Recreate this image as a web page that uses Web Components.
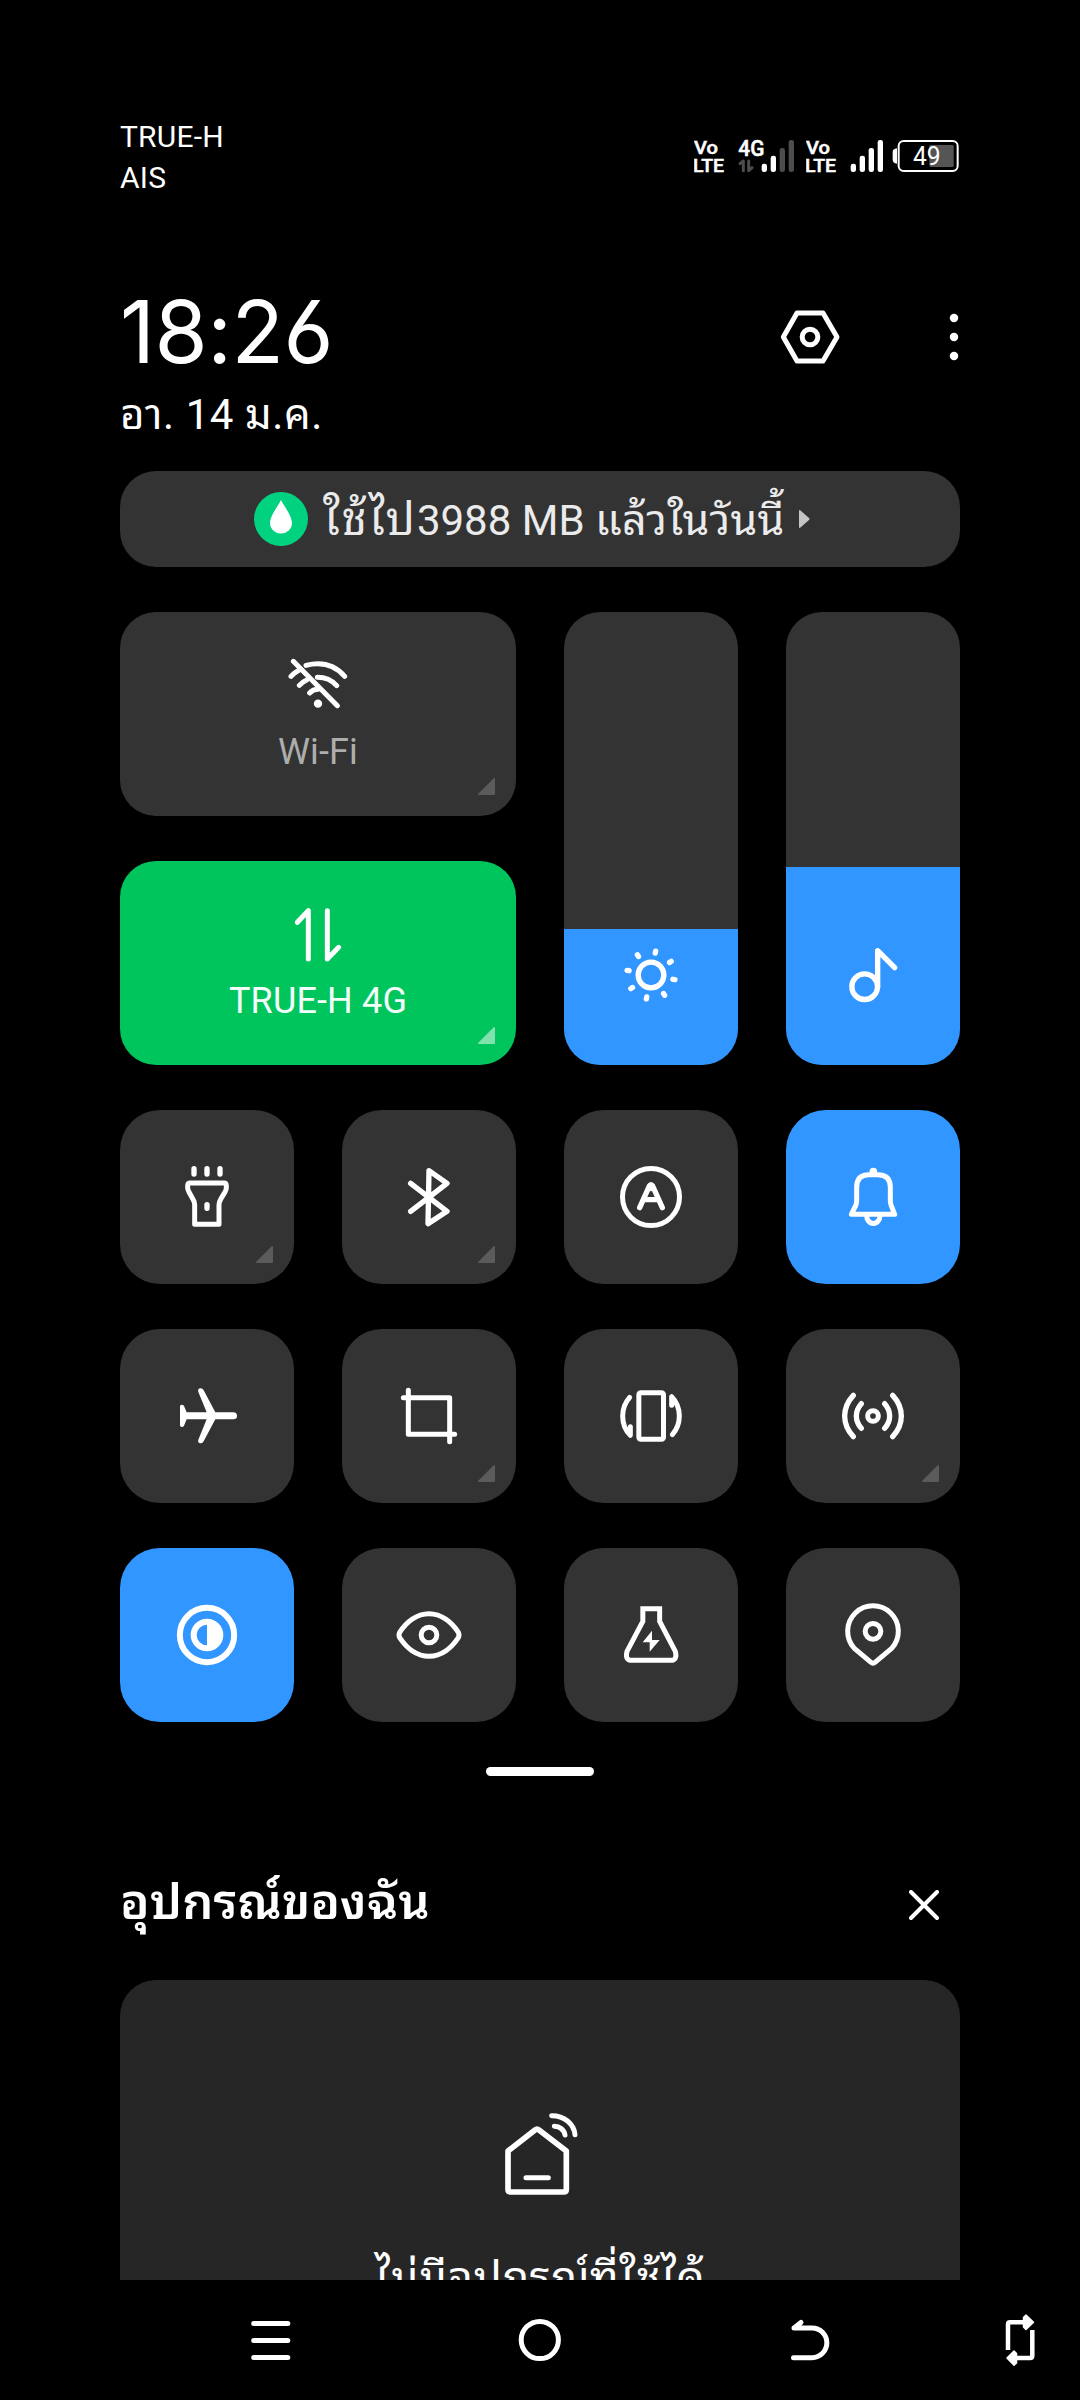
<!DOCTYPE html>
<html lang="th">
<head>
<meta charset="utf-8">
<title>Control center</title>
<style>
html,body{margin:0;background:#000}
body{width:1080px;height:2400px;overflow:hidden;font-family:Roboto,"Noto Sans Thai Looped","Noto Sans Thai","Noto Sans",sans-serif;color:#fff}
</style>
</head>
<body>
<control-center></control-center>
<script>
const define = (name, html) => {
  const t = document.createElement('template');
  t.innerHTML = html;
  customElements.define(name, class extends HTMLElement {
    constructor() {
      super();
      this.attachShadow({mode: 'open'}).appendChild(t.content.cloneNode(true));
    }
  });
};

/* Icons: [viewBox, width, height, markup]; drawn on a 3x grid */
const mirror = 'transform="translate(1938 0) scale(-1 1)"';
const ICONS = {
  settings: ['114 76 192 192', 64, 64, '<path d="M171 100H249L291 172L249 244H171L130 172Z"/><circle cx="210" cy="172" r="23.5"/>'],
  more: ['624 76 36 192', 12, 64, '<g fill="#fff" stroke="none"><circle cx="642" cy="115" r="12.7"/><circle cx="642" cy="172" r="12.7"/><circle cx="642" cy="229" r="12.7"/></g>'],
  drop: ['0 0 54 54', 54, 54, '<g stroke="none"><circle cx="27" cy="27" r="27" fill="#00d27f"/><path fill="#fff" d="M27 8C30 14 38 24 38 31A11 10.5 0 0 1 16 31C16 24 24 14 27 8Z"/></g>'],
  arrow: ['0 0 11 18', 11, 18, '<path fill="#c4c4c4" stroke="none" d="M0 1Q0 -1 2 1L10 8Q11 9 10 10L2 17Q0 19 0 17Z"/>'],
  wifi: ['534 166 180 160', 60, 53.33, '<path d="M588 194Q660 176 704 227M622 230Q658 230 680 255M543 227Q550 219 560 213L571 206M568 254Q578 243 590 238M599 277Q609 266 624 266"/><path d="M550 182L682 315" stroke-width="15"/><circle cx="624" cy="309" r="12.5" fill="#fff" stroke="none"/>'],
  data: ['534 910 180 180', 60, 60, '<path d="M562 962L595 927V1072M652 927V1072L686 1037"/>'],
  sun: ['42 123 522 522', 174, 174, '<g stroke-width="16"><circle cx="303" cy="375" r="38.5"/>' + [0,1,2,3,4,5,6,7].map(i => `<path d="M303 308V302" transform="rotate(${11 + 45 * i} 303 375)"/>`).join('') + '</g>'],
  note: ['708 123 522 522', 174, 174, '<g stroke-width="16"><circle cx="944" cy="410" r="38.5"/><path d="M983 410V302L1034 353"/></g>'],
  torch: ['30 30 522 522', 174, 174, '<path d="M252 206V222M291 206V222M330 206V222M291 314V325" stroke-width="16"/><path d="M241 249H342Q349 249 349 257V263Q349 269 345 276L332 298Q327 306 327 314V373H254V314Q254 306 249 298L237 276Q233 269 233 263V257Q233 249 241 249Z"/>'],
  bluetooth: ['696 30 522 522', 174, 174, '<path stroke-width="16" d="M902 250L1011 334L954 371L957 212L1011 250L902 334"/>'],
  auto: ['42 30 522 522', 174, 174, '<circle cx="303" cy="291" r="85.5"/><path stroke-width="16" d="M269 323L298 258Q303 250 308 258L337 323M284 299H322"/><path d="M303 258V266"/>'],
  bell: ['708 30 522 522', 174, 174, '<circle cx="970" cy="215" r="11.5" fill="#fff" stroke="none"/><path d="M904 343L917 317Q920 310 920 302V262Q920 224 956 224H984Q1021 224 1021 262V302Q1021 310 1024 317L1034 343ZM950 347A20 23.5 0 0 0 990 347"/>'],
  plane: ['30 687 522 522', 174, 174, '<path fill="#fff" stroke="none" d="M230 937H290L265 876Q262 865 272 865Q278 865 281 871L316 937H370Q381 937 381 948Q381 958 370 958H316L281 1024Q278 1030 272 1030Q262 1029 265 1019L290 958H230L222 977Q220 981 215 981Q210 981 210 976V919Q210 914 215 914Q220 914 222 918Z"/>'],
  crop: ['696 687 522 522', 174, 174, '<path d="M880 893H1019V1025M895 871V1003H1034"/>'],
  rotate: ['42 687 522 522', 174, 174, '<rect x="266.500" y="878" width="74" height="140" rx="6"/>' + [0, 180].map(a => `<g transform="rotate(${a} 303 948)"><path d="M239 892Q218 916 218 948Q218 983 241 1006V980"/><path fill="#fff" stroke-width="4" d="M241 1006V980L228 988Z"/></g>`).join('')],
  hotspot: ['708 687 522 522', 174, 174, '<circle cx="969" cy="948" r="16"/>' + ['', mirror].map(m => `<path stroke-width="16" ${m} d="M934 911Q919 928 919 948Q919 968 934 985M910 886Q884 914 884 948Q884 982 910 1010"/>`).join('')],
  contrast: ['0 0 522 522', 174, 174, '<g stroke-width="18"><circle cx="261" cy="261" r="81.500"/><circle cx="261" cy="261" r="40"/></g><path fill="#fff" stroke="none" d="M261 221A40 40 0 0 1 261 301Z"/>'],
  eye: ['0 0 522 522', 174, 174, '<path d="M173 253C192 224 223 197 261 197S330 224 349 253Q353 261 349 269C330 298 299 325 261 325S192 298 173 269Q169 261 173 253Z"/><circle cx="261" cy="261" r="23.500"/>'],
  flask: ['0 0 522 522', 174, 174, '<path stroke-linejoin="miter" d="M236.500 182H287V220L334 310Q341 337 320 337H203Q182 337 189 310L236.500 220Z"/><path fill="#fff" stroke="none" d="M264 248L236 283H257V311L287 276H264Z"/>'],
  pin: ['0 0 522 522', 174, 174, '<path d="M255 343L205 301A76 76 0 1 1 317 301L267 343Q261 349 255 343Z"/><circle cx="261" cy="250" r="23.500"/>'],
  close: ['0 0 30 30', 30, 30, '<path stroke-width="4" d="M2 2L28 28M28 2L2 28"/>'],
  home: ['480 90 240 265', 80, 88.33, '<path stroke-width="17" d="M504 213L585 150Q591 145 597 150L679 213V328Q679 336 671 336H512Q504 336 504 328Z"/><path d="M558 293H625M635 107A69 62 0 0 1 705 164M643 139A32 30 0 0 1 675 165"/>'],
  recents: ['240 0 60 120', 60, 120, '<path stroke-width="5" d="M253.700 43.500H287.800M253.700 60.500H287.800M253.700 77.500H287.800"/>'],
  circle: ['510 0 60 120', 60, 120, '<circle stroke-width="5" cx="539.800" cy="60" r="18.600"/>'],
  back: ['780 0 60 120', 60, 120, '<path stroke-width="5" d="M793.500 77.700H812A14.600 14.600 0 0 0 812 48H794L801 42.500"/><path fill="#fff" stroke="none" d="M792 47L801 41V50H793Z"/>'],
  flip: ['990 0 60 120', 60, 120, '<g stroke-linecap="butt" stroke-width="4.500"><path d="M1008 70V44.500Q1008 42.300 1010 42.300H1027M1032.300 50V76Q1032.300 78 1030 78H1014"/></g><path fill="#fff" stroke="#fff" stroke-width="1.500" d="M1026 35L1033.500 42.300L1026 49.500L1023.500 47V37.500ZM1014 71L1007 78L1014 85.300L1016.500 83V73.500Z"/>'],
};

customElements.define('cc-icon', class extends HTMLElement {
  constructor() { super(); this.attachShadow({mode: 'open'}); }
  connectedCallback() {
    const [box, w, h, body] = ICONS[this.getAttribute('name')];
    this.shadowRoot.innerHTML = `<style>:host{display:block;flex:none}svg{display:block}</style>
<svg viewBox="${box}" width="${w}" height="${h}" fill="none" stroke="#fff" stroke-width="15" stroke-linecap="round" stroke-linejoin="round">${body}</svg>`;
  }
});

define('volte-badge', `<style>:host{display:block}svg{display:block;fill:#fff;font-weight:500;stroke:#fff;stroke-width:1.5}</style>
<svg viewBox="102 78 96 120" width="32" height="40"><text x="102" y="131" font-size="56" textLength="72" lengthAdjust="spacingAndGlyphs">Vo</text><text x="99" y="185" font-size="57" textLength="93" lengthAdjust="spacingAndGlyphs">LTE</text></svg>`);

define('signal-4g', `<style>:host{display:block}svg{display:block;fill:#fff}</style>
<svg viewBox="234 78 174 120" width="58" height="40"><text x="235" y="137" font-size="64" font-weight="500" textLength="78" lengthAdjust="spacingAndGlyphs" stroke="#fff" stroke-width="1.500">4G</text>
<path d="M240 161L250 153V182M266 153V182L276 173" fill="none" stroke="#4d4d4d" stroke-width="9" stroke-linecap="round" stroke-linejoin="round"/>
<rect x="305" y="161" width="16" height="25" rx="7"/><rect x="332" y="137" width="16" height="49" rx="7"/><g fill="#4d4d4d"><rect x="359" y="114" width="16" height="72" rx="7"/><rect x="386" y="90" width="16" height="96" rx="7"/></g></svg>`);

define('signal-full', `<style>:host{display:block}svg{display:block;fill:#fff}</style>
<svg viewBox="570 78 102 120" width="34" height="40"><rect x="572" y="161" width="16" height="25" rx="7"/><rect x="599" y="137" width="16" height="49" rx="7"/><rect x="626" y="114" width="16" height="72" rx="7"/><rect x="653" y="90" width="16" height="96" rx="7"/></svg>`);

define('battery-level', `<style>:host{display:block}svg{display:block}</style>
<svg viewBox="696 78 204 120" width="68" height="40"><path d="M711 115Q698 117 698 126V150Q698 159 711 161Z" fill="#fff"/><rect x="716" y="93" width="177" height="90" rx="15" fill="none" stroke="#fff" stroke-width="6"/><rect x="808" y="105" width="73" height="66" rx="4" fill="#555"/><text x="759" y="165" font-size="76" fill="#fff" textLength="83" lengthAdjust="spacingAndGlyphs">49</text></svg>`);

define('status-bar', `<style>:host{display:flex;justify-content:space-between;height:82px;padding:116px 120px 0}
.ops{font-size:30px;line-height:41px;letter-spacing:.2px}
.icons{display:flex;margin:20px 0 0 0;height:40px}
signal-4g{margin-left:12px}signal-4g+volte-badge{margin-left:10px}signal-full{margin-left:12px}battery-level{margin-left:8px}</style>
<div class="ops"><div>TRUE-H</div><div>AIS</div></div>
<div class="icons"><volte-badge></volte-badge><signal-4g></signal-4g><volte-badge></volte-badge><signal-full></signal-full><battery-level></battery-level></div>`);

define('clock-header', `<style>:host{display:flex;justify-content:space-between;height:163px;padding:84px 120px 0}
.time{font:400 86px/100px Inter,Roboto,sans-serif;font-feature-settings:"cv03";height:103px;letter-spacing:-.5px}
.date{font-size:42px;line-height:60px;white-space:nowrap;letter-spacing:.6px}
.tools{display:flex;gap:106px;padding-top:23px}</style>
<div><div class="time">18:26</div><div class="date">อา. 14 ม.ค.</div></div>
<div class="tools"><cc-icon name="settings"></cc-icon><cc-icon name="more"></cc-icon></div>`);

define('data-usage', `<style>:host{display:flex;align-items:center;box-sizing:border-box;height:96px;margin:26px 120px 0;padding-left:134px;border-radius:36px;background:#333}
.text{margin:3px 16px 0 15px;width:460px;font-size:42px;line-height:60px;color:#ebebeb;white-space:nowrap}cc-icon:first-child{margin-top:-2px}</style>
<cc-icon name="drop"></cc-icon><span class="text"><slot></slot></span><cc-icon name="arrow"></cc-icon>`);

define('corner-mark', `<style>:host{display:block}svg{display:block}</style>
<svg width="17" height="17" viewBox="0 0 17 17"><path d="M15.500 .5Q17 -.5 17 1V16Q17 17 16 17H1Q-.5 17 .5 15.500Z" fill="#fff" style="fill-opacity:var(--mark,.2)"/></svg>`);

define('toggle-tile', `<style>:host{display:grid;border-radius:40px;background:#333;overflow:hidden}
:host([on]){background:#3196ff}
::slotted(*){grid-area:1/1}
.mark{grid-area:1/1;place-self:end;margin:21px}</style><slot></slot><div class="mark"><slot name="mark"></slot></div>`);

define('wide-tile', `<style>:host{display:grid;grid-column:span 2;border-radius:36px;background:#333;--label:#adadad}
:host([on]){background:#00c45c;--label:#f2fffa;--mark:.5}
.body{grid-area:1/1;display:flex;flex-direction:column;align-items:center;padding-top:44px}
.icon{height:71px}.label{font-size:36px;line-height:50px;color:var(--label);letter-spacing:.15px}
corner-mark{grid-area:1/1;place-self:end;margin:21px}</style>
<div class="body"><div class="icon"><slot name="icon"></slot></div><div class="label"><slot></slot></div></div><corner-mark></corner-mark>`);

define('level-slider', `<style>:host{display:flex;flex-direction:column;justify-content:flex-end;grid-row:span 2;border-radius:36px;background:#333;overflow:hidden}
.fill{display:flex;align-items:flex-end;background:#3196ff;height:var(--level)}::slotted(*){display:block}</style><div class="fill"><slot></slot></div>`);

define('quick-grid', `<style>:host{display:grid;grid-template-columns:repeat(4,174px);grid-template-rows:204px 204px 174px 174px 174px;gap:45px 48px;margin:45px 120px 0}
level-slider.b{--level:136px;grid-column:3;grid-row:1/3}level-slider.v{--level:198px;grid-column:4;grid-row:1/3}</style>
<wide-tile><cc-icon slot="icon" name="wifi"></cc-icon>Wi-Fi</wide-tile>
<level-slider class="b"><cc-icon name="sun"></cc-icon></level-slider><level-slider class="v"><cc-icon name="note"></cc-icon></level-slider>
<wide-tile on><cc-icon slot="icon" name="data"></cc-icon>TRUE-H 4G</wide-tile>
<toggle-tile><cc-icon name="torch"></cc-icon><corner-mark slot="mark"></corner-mark></toggle-tile>
<toggle-tile><cc-icon name="bluetooth"></cc-icon><corner-mark slot="mark"></corner-mark></toggle-tile>
<toggle-tile><cc-icon name="auto"></cc-icon></toggle-tile>
<toggle-tile on><cc-icon name="bell"></cc-icon></toggle-tile>
<toggle-tile><cc-icon name="plane"></cc-icon></toggle-tile>
<toggle-tile><cc-icon name="crop"></cc-icon><corner-mark slot="mark"></corner-mark></toggle-tile>
<toggle-tile><cc-icon name="rotate"></cc-icon></toggle-tile>
<toggle-tile><cc-icon name="hotspot"></cc-icon><corner-mark slot="mark"></corner-mark></toggle-tile>
<toggle-tile on><cc-icon name="contrast"></cc-icon></toggle-tile>
<toggle-tile><cc-icon name="eye"></cc-icon></toggle-tile>
<toggle-tile><cc-icon name="flask"></cc-icon></toggle-tile>
<toggle-tile><cc-icon name="pin"></cc-icon></toggle-tile>`);

define('drag-handle', `<style>:host{display:block;width:108px;height:9px;border-radius:4.5px;background:#fff;margin:45px auto 0}</style>`);

define('device-panel', `<style>:host{display:flex;flex-direction:column;flex:1;min-height:0;overflow:hidden;padding:94px 120px 0}
.head{display:flex;justify-content:space-between;height:110px}
h2{margin:-2px 0 0;font-size:49px;line-height:70px;font-weight:600;letter-spacing:.1px;white-space:nowrap}
cc-icon[name=close]{margin:19.500px 21px 0 0}
.card{flex:1;min-height:0;overflow:hidden;display:flex;flex-direction:column;align-items:center;border-radius:36px 36px 0 0;background:#262626;padding-top:130px}
p{margin:50px 0 0;font-size:44px;line-height:60px;letter-spacing:.4px;white-space:nowrap}</style>
<div class="head"><h2>อุปกรณ์ของฉัน</h2><cc-icon name="close"></cc-icon></div>
<div class="card"><cc-icon name="home"></cc-icon><p>ไม่มีอุปกรณ์ที่ใช้ได้</p></div>`);

define('nav-bar', `<style>:host{display:flex;height:120px;padding-left:240px;gap:210px;background:#000}cc-icon:last-child{margin-left:-60px}</style>
<cc-icon name="recents"></cc-icon><cc-icon name="circle"></cc-icon><cc-icon name="back"></cc-icon><cc-icon name="flip"></cc-icon>`);

define('control-center', `<style>:host{display:flex;flex-direction:column;width:1080px;height:2400px;background:#000;overflow:hidden}
.lead{font-size:45px;letter-spacing:2px}.tail{font-size:43px;letter-spacing:.2px}</style>
<status-bar></status-bar><clock-header></clock-header>
<data-usage><span class="lead">ใช้ไป</span>3988 MB <span class="tail">แล้วในวันนี้</span></data-usage>
<quick-grid></quick-grid><drag-handle></drag-handle><device-panel></device-panel><nav-bar></nav-bar>`);
</script>
</body>
</html>
